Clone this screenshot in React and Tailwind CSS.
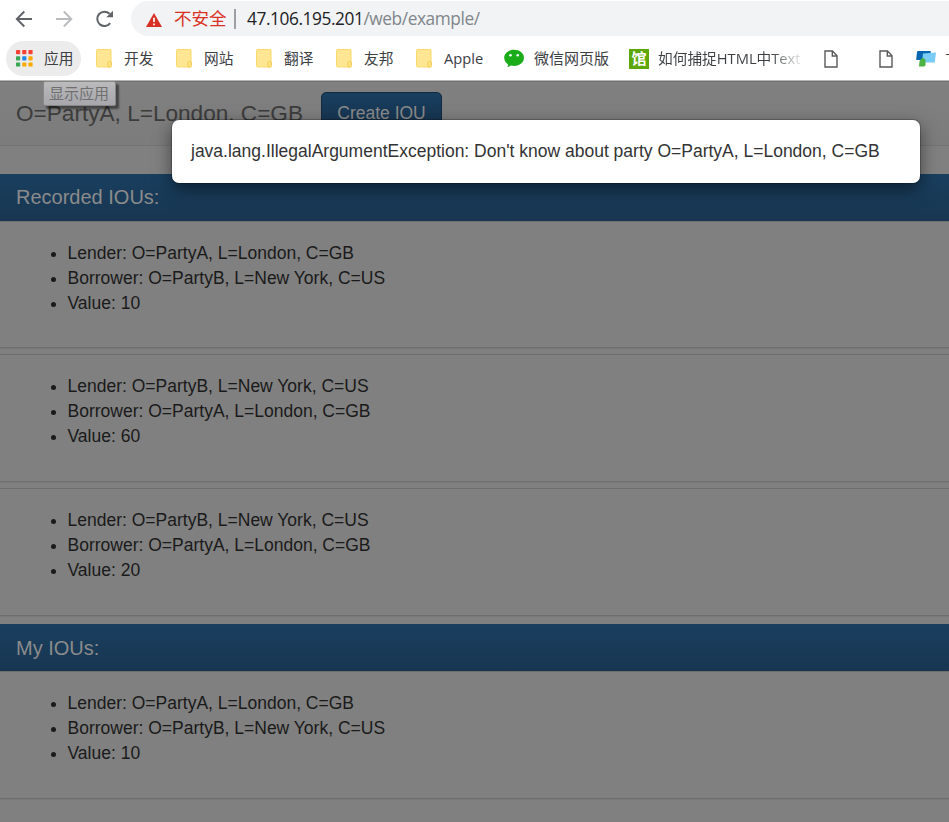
const uiFont = "font-['Open_Sans','Noto_Sans_CJK_SC',sans-serif]";

function Folder() {
  return (
    <svg width="18" height="20" viewBox="0 0 18 20" className="mt-0.5 shrink-0">
      <rect x="0.5" y="0.5" width="14.5" height="17.5" rx="1.2" fill="#ffe695" stroke="#fbd968" />
      <path d="M12 18V13.5Q12 12.5 13.5 12.5Q15.5 12.5 15.5 14V16.5Q15.5 18 14 18Z" fill="#ffe48c" stroke="#f3cd52" />
    </svg>
  );
}

function Doc() {
  return (
    <svg width="14" height="18" viewBox="0 0 14 18" fill="none" stroke="#5a5a5a" strokeWidth="1.4" className="mt-0.5 shrink-0">
      <path d="M1 1H8.5L13 5.8V17H1Z" />
      <path d="M8.3 1V6H13" />
    </svg>
  );
}

const dots = ["#f44336", "#f44336", "#f44336", "#3aa757", "#1e88e5", "#f9ab00", "#3aa757", "#f9ab00", "#f9ab00"];

function AppsIcon() {
  return (
    <svg width="17" height="17" viewBox="0 0 17 17" className="shrink-0">
      {dots.map((c, i) => (
        <rect key={i} x={(i % 3) * 6.2} y={Math.floor(i / 3) * 6.2} width="4.2" height="4.2" rx="0.6" fill={c} />
      ))}
    </svg>
  );
}

function Browser() {
  return (
    <header className={`h-20 overflow-hidden bg-white ${uiFont}`}>
      <div className="flex h-9 items-start">
        <div className="flex w-[131px] shrink-0 pt-[9px] pl-[15px]">
          <svg width="20" height="20" viewBox="0 0 20 20" fill="none" stroke="#5f6368" strokeWidth="1.9">
            <path d="M17 10H2.5M9.3 2.5L1.8 10L9.3 17.5" />
          </svg>
          <svg width="20" height="20" viewBox="0 0 20 20" fill="none" stroke="#babcbe" strokeWidth="1.9" className="ml-5">
            <path d="M1 10H15.7M8.8 2.5L16.3 10L8.8 17.5" />
          </svg>
          <svg width="20" height="20" viewBox="0 0 20 20" className="ml-5">
            <path d="M15.2 14.2A7.2 7.2 0 1 1 14.6 4.8" fill="none" stroke="#5f6368" strokeWidth="2" />
            <path d="M18 1.8V8.3H11.2Z" fill="#5f6368" />
          </svg>
        </div>
        <div className="mt-px flex h-[35px] flex-1 items-center overflow-hidden rounded-l-full bg-[#f1f3f4] text-[17.3px] whitespace-nowrap">
          <svg width="16" height="14" viewBox="0 0 16 14" className="mt-0.5 ml-[15px] shrink-0">
            <path d="M8 0L16 14H0Z" fill="#d93025" />
            <path d="M8 4.8V9M8 10.5V12.2" stroke="#fff" strokeWidth="1.7" />
          </svg>
          <span className="ml-3 w-[54px] text-[17.5px] text-[#d93025]">不安全</span>
          <span className="ml-[6px] h-5 w-0.5 bg-[#9aa0a6]" />
          <span className="ml-[11px] inline-block w-[234px] tracking-[-0.42px] text-[#202124]">
            47.106.195.201<span className="text-[#80868b]">/web/example/</span>
          </span>
        </div>
      </div>
      <nav className="mt-[5px] flex h-[35px] items-center overflow-hidden text-[14.7px] whitespace-nowrap text-[#3c4043]">
        <div className="ml-1.5 flex h-[35px] w-[75px] shrink-0 items-center rounded-full bg-[#ececed] pl-[10px]">
          <AppsIcon />
          <span className="ml-[11px]">应用</span>
        </div>
        {["开发", "网站", "翻译", "友邦", "Apple"].map((t, i) => (
          <div key={t} className={i === 0 ? "ml-[15px] flex w-20 shrink-0 items-center" : i === 4 ? "flex w-[87px] shrink-0 items-center" : "flex w-20 shrink-0 items-center"}>
            <Folder />
            <span className="ml-[10px]">{t}</span>
          </div>
        ))}
        <div className="flex w-[126px] shrink-0 items-center">
          <svg width="21" height="19" viewBox="0 0 21 19" className="ml-px shrink-0">
            <path d="M10 0.8C4.5 0.8 0.2 4.3 0.2 8.8C0.2 11.5 1.7 13.9 4.1 15.4L3.5 18.3L6.8 16.6C14 18.5 20 14 20 8.8C20 4.3 15.5 0.8 10 0.8Z" fill="#1aad19" />
            <circle cx="6.5" cy="6.3" r="1.3" fill="#fff" />
            <circle cx="13.7" cy="6.3" r="1.3" fill="#fff" />
          </svg>
          <span className="ml-[9px] text-[15px]">微信网页版</span>
        </div>
        <div className="flex w-[195px] shrink-0 items-center">
          <span className="mt-px flex size-5 shrink-0 items-center justify-center bg-[#5da709] text-[15px] leading-none font-bold text-white">馆</span>
          <span className="ml-[9px] w-[142px] overflow-hidden bg-linear-to-r from-[#3c4043] from-80% to-[#3c404320] bg-clip-text text-transparent">如何捕捉HTML中Text</span>
        </div>
        <div className="flex shrink-0 items-center">
          <Doc />
          <span className="w-[41px]" />
          <Doc />
          <svg width="20" height="17" viewBox="0 0 20 17" className="mt-px ml-[23px] shrink-0">
            <path d="M1.5 1H14Q15 1 14.8 2L13.4 10H1Q0 10 0.2 9L1 2Z" fill="#0866b1" />
            <path d="M7 3.5L20 2.5L18.8 12.5H6Z" fill="#7acbf6" />
            <path d="M3.5 11L6.5 7.5L9.5 9.5V15L8.5 16.5H3Z" fill="#4ab344" />
          </svg>
          <span className="ml-[10px]">T</span>
        </div>
      </nav>
    </header>
  );
}

function Heading({ children, className }) {
  return (
    <h3 className={`h-[47px] bg-linear-to-b from-[#193f5f] to-[#183651] pl-4 text-[20px] text-[#8b8b8b] ${className}`}>
      {children}
    </h3>
  );
}

function Iou({ lender, borrower, value, className }) {
  return (
    <div className={`border-y border-[#6e6e6e] bg-[#808080] pt-[19px] shadow-[0_1px_1px_rgba(0,0,0,0.05)] ${className}`}>
      <ul className="list-disc pl-[67.5px] text-[17.5px] leading-[25px] text-[#1a1a1a]">
        <li>Lender: {lender}</li>
        <li>Borrower: {borrower}</li>
        <li>Value: {value}</li>
      </ul>
    </div>
  );
}

const A = "O=PartyA, L=London, C=GB";
const B = "O=PartyB, L=New York, C=US";

export default function App() {
  return (
    <div className="relative h-[822px] w-[949px] overflow-hidden bg-[#808080] font-['Liberation_Sans',sans-serif]">
      <Browser />
      <main className="border-t border-[#b3b6b3]">
        <div className="flex h-[65px] items-start border-t border-b border-t-[#707370] border-b-[#747474] bg-linear-to-b from-[#808080] to-[#7c7c7c] pl-4">
          <h1 className="w-[305px] pt-[17px] text-[22.6px] leading-[29px] whitespace-nowrap text-[#3c3c3c]">{A}</h1>
          <button className="mt-2.5 h-[43px] w-[121px] rounded-[5px] border border-[#122b40] bg-linear-to-b from-[#193f5f] to-[#16304a] text-[17.5px] text-[#8b8b8b]">
            Create IOU
          </button>
        </div>
        <section className="mt-7">
          <Heading className="leading-[46px]">Recorded IOUs:</Heading>
          <Iou lender={A} borrower={B} value="10" className="h-[127px]" />
          <Iou lender={B} borrower={A} value="60" className="mt-1.5 h-32" />
          <Iou lender={B} borrower={A} value="20" className="mt-1.5 h-32" />
        </section>
        <section className="mt-2">
          <Heading className="leading-[48px]">My IOUs:</Heading>
          <Iou lender={A} borrower={B} value="10" className="h-32" />
        </section>
      </main>
      <div className={`absolute top-[81px] left-[43px] h-[25px] w-[73px] rounded-[2px] border border-[#888] bg-linear-to-b from-[#bbbbbc] to-[#a6a6ac] pl-[5px] text-[15px] leading-[23px] text-[#707070] shadow-[3px_3px_2px_rgba(0,0,0,0.45)] ${uiFont}`}>
        显示应用
      </div>
      <div role="dialog" className="absolute top-[120px] left-[172px] h-[63px] w-[748px] rounded-[7px] bg-white pt-[19px] pl-[19px] text-[17.5px] leading-[25px] whitespace-nowrap text-[#333] shadow-[0_0_0_1px_rgba(0,0,0,0.2),0_6px_18px_rgba(0,0,0,0.5)]">
        java.lang.IllegalArgumentException: Don't know about party {A}
      </div>
    </div>
  );
}
